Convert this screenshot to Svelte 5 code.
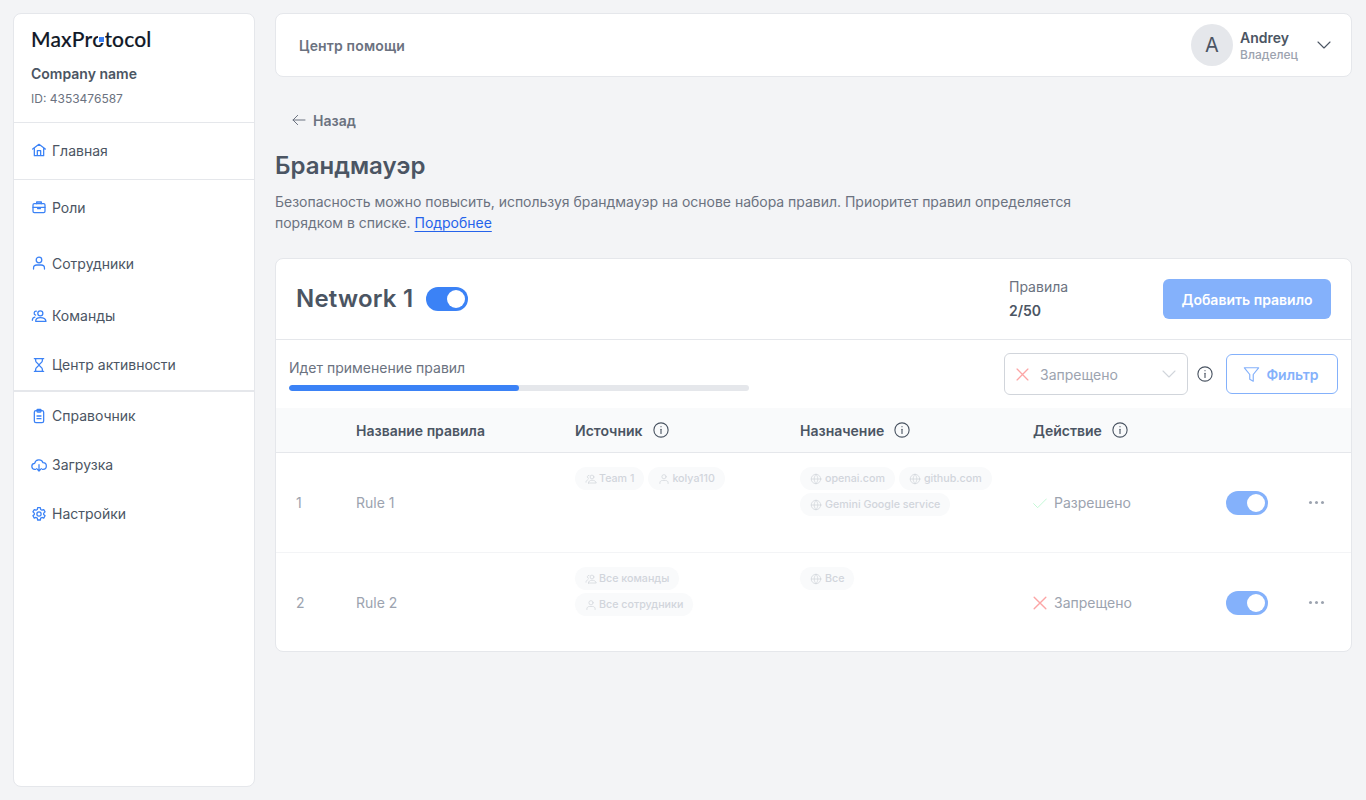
<script>
  const nav1 = [
    { label: 'Роли', icon: 'brief', h: 'tall' },
    { label: 'Сотрудники', icon: 'user', h: 'tall' },
    { label: 'Команды', icon: 'team', h: '' },
    { label: 'Центр активности', icon: 'hour', h: '' }
  ];
  const nav2 = [
    { label: 'Справочник', icon: 'clip' },
    { label: 'Загрузка', icon: 'cloud' },
    { label: 'Настройки', icon: 'gear' }
  ];
  const rows = [
    {
      n: 1, name: 'Rule 1',
      src: [{ t: 'Team 1', i: 'team' }, { t: 'kolya110', i: 'user' }],
      dst: [{ t: 'openai.com', i: 'globe' }, { t: 'github.com', i: 'globe' }, { t: 'Gemini Google service', i: 'globe' }],
      ok: true, action: 'Разрешено'
    },
    {
      n: 2, name: 'Rule 2',
      src: [{ t: 'Все команды', i: 'team' }, { t: 'Все сотрудники', i: 'user' }],
      dst: [{ t: 'Все', i: 'globe' }],
      ok: false, action: 'Запрещено'
    }
  ];
  const heads = [
    { t: 'Источник', info: true },
    { t: 'Назначение', info: true },
    { t: 'Действие', info: true }
  ];
</script>

{#snippet icon(name, size, sw = 1.5)}
  <svg class="ic" width={size} height={size} viewBox="0 0 24 24" fill="none" stroke="currentColor" stroke-width={sw} stroke-linecap="round" stroke-linejoin="round">
    {#if name === 'home'}
      <path d="M2.500 10.500 12 3.500l9.500 7M5 9v11.500h14V9M9.500 20.500V13h5v7.500" />
    {:else if name === 'brief'}
      <path d="M8.500 7V4.500h7V7" /><rect x="3" y="7" width="18" height="13.500" rx="2" /><path d="M3 12.500h18M10 12.500v2h4v-2" />
    {:else if name === 'user'}
      <circle cx="12" cy="7.500" r="4.200" /><path d="M3.800 21v-1.500c0-2.800 2.200-4.500 5-4.500h6.400c2.800 0 5 1.700 5 4.500V21" />
    {:else if name === 'team'}
      <circle cx="14" cy="8" r="3.800" /><path d="M7 20c0-3.500 2.500-5.500 7-5.500s8 2 8.500 5.500H7Z" /><path d="M8 4.800a3 3 0 0 0-1 5.900M2 18.500c0-2.800 1.300-4.300 3.800-4.800" />
    {:else if name === 'hour'}
      <path d="M5 2.500h14M5 21.500h14M7 2.500v3.500c0 2.500 5 4.500 5 6s-5 3.500-5 6v3.500M17 2.500v3.500c0 2.500-5 4.500-5 6s5 3.500 5 6v3.500" />
    {:else if name === 'clip'}
      <rect x="5" y="4" width="14" height="18" rx="2.500" /><rect x="9" y="2" width="6" height="4" rx="1" /><path d="M9 12h6M9 16h6" />
    {:else if name === 'cloud'}
      <path d="M7 18.500H6a4.500 4.500 0 0 1-.5-9A6.500 6.500 0 0 1 18 8.500a5 5 0 0 1 0 10h-1" /><path d="M12 11.500v9M8.500 17.500l3.500 3.500 3.500-3.500" />
    {:else if name === 'gear'}
      <circle cx="12" cy="12" r="3.200" /><path d="M10 2.500h4l.6 2.800 1.800 1 2.700-.9 2 3.400-2.100 1.900v2.100l2.100 1.900-2 3.400-2.700-.9-1.800 1-.6 2.800h-4l-.6-2.800-1.800-1-2.700.9-2-3.400 2.100-1.900v-2.100L2.900 8.800l2-3.400 2.700.9 1.800-1Z" />
    {:else if name === 'globe'}
      <circle cx="12" cy="12" r="9.500" /><path d="M2.500 12h19M12 2.500c-5 5.500-5 13.500 0 19M12 2.500c5 5.500 5 13.500 0 19" />
    {:else if name === 'info'}
      <circle cx="12" cy="12" r="9.500" /><path d="M12 11v5.500" /><path d="M12 7.500v.2" />
    {:else if name === 'x'}
      <path d="M2 2l20 20M22 2 2 22" />
    {:else if name === 'check'}
      <path d="M1 13l7 7L23 5" />
    {:else if name === 'down'}
      <path d="M4 8l8 8 8-8" />
    {:else if name === 'filter'}
      <path d="M3 3.500h18l-6.800 8.500v8.500l-4.400-2.500v-6L3 3.500Z" />
    {:else if name === 'back'}
      <path d="M21 12H3M10 5l-7 7 7 7" />
    {/if}
  </svg>
{/snippet}

{#snippet navItem(item)}
  <div class="nav-item {item.h || ''}">
    <span class="nav-ic">{@render icon(item.icon, 16, 1.9)}</span>
    <span>{item.label}</span>
  </div>
{/snippet}

{#snippet chips(list, kind)}
  <div class="chips {kind}">
    {#each list as c}
      <span class="chip">{@render icon(c.i, 12)}{c.t}</span>
    {/each}
  </div>
{/snippet}

<div class="page">
  <aside class="side">
    <div class="brand">
      <div class="logo">MaxPr<span class="logo-o">o<i></i></span>tocol</div>
      <div class="company">Company name</div>
      <div class="cid">ID: 4353476587</div>
    </div>
    <div class="nav-home">
      {@render navItem({ label: 'Главная', icon: 'home', h: 'home' })}
    </div>
    <div class="nav-a">
      {#each nav1 as item}{@render navItem(item)}{/each}
    </div>
    <div>
      {#each nav2 as item}{@render navItem(item)}{/each}
    </div>
  </aside>

  <main class="main">
    <header class="top">
      <div class="top-title">Центр помощи</div>
      <div class="profile">
        <div class="avatar">A</div>
        <div class="who">
          <div class="who-name">Andrey</div>
          <div class="who-role">Владелец</div>
        </div>
        <span class="who-arrow">{@render icon('down', 18)}</span>
      </div>
    </header>

    <div class="back">{@render icon('back', 16)}<span>Назад</span></div>
    <h1>Брандмауэр</h1>
    <p class="desc">Безопасность можно повысить, используя брандмауэр на основе набора правил. Приоритет правил определяется порядком в списке. <a href="#more">Подробнее</a></p>

    <section class="card">
      <div class="card-head">
        <div class="net">
          <span class="net-name">Network 1</span>
          <span class="toggle strong"><i></i></span>
        </div>
        <div class="rules">
          <div class="rules-label">Правила</div>
          <div class="rules-val">2/50</div>
        </div>
        <button class="add">Добавить правило</button>
      </div>

      <div class="tools">
        <div class="progress">
          <div class="progress-label">Идет применение правил</div>
          <div class="track"><div class="fill" style="width: 50%"></div></div>
        </div>
        <div class="select">
          <span class="sel-x">{@render icon('x', 13, 2.4)}</span>
          <span class="sel-t">Запрещено</span>
          <span class="sel-d">{@render icon('down', 18)}</span>
        </div>
        <span class="tool-info">{@render icon('info', 18)}</span>
        <button class="filter">{@render icon('filter', 19)}<span>Фильтр</span></button>
      </div>

      <div class="grid thead">
        <div></div>
        <div>Название правила</div>
        {#each heads as h}
          <div class="th">{h.t}<span class="th-i">{@render icon('info', 18)}</span></div>
        {/each}
        <div></div>
        <div></div>
      </div>

      {#each rows as r}
        <div class="grid row">
          <div class="cell-c muted">{r.n}</div>
          <div class="cell-c muted">{r.name}</div>
          <div>{@render chips(r.src, 'src')}</div>
          <div>{@render chips(r.dst, 'dst')}</div>
          <div class="cell-c act">
            <span class={r.ok ? 'ok' : 'no'}>{@render icon(r.ok ? 'check' : 'x', 14, r.ok ? 1.5 : 2.4)}</span>
            <span class="muted">{r.action}</span>
          </div>
          <div class="cell-c"><span class="toggle"><i></i></span></div>
          <div class="cell-c dots"><b></b><b></b><b></b></div>
        </div>
      {/each}
    </section>
  </main>
</div>

<style>
  :global(body) {
    margin: 0;
    background: #f3f4f6;
    font-family: Inter, "Noto Sans", sans-serif;
    color: #4b5563;
  }
  .page {
    display: flex;
    gap: 20px;
    height: 800px;
    box-sizing: border-box;
    padding: 13px 14px 13px 13px;
    overflow: hidden;
  }
  .ic { display: block; flex: none; }

  .side {
    width: 242px;
    flex: none;
    box-sizing: border-box;
    background: #fff;
    border: 1px solid #e5e7eb;
    border-radius: 8px;
    font-size: 14px;
  }
  .brand {
    height: 109px;
    box-sizing: border-box;
    padding: 11px 0 0 17px;
    border-bottom: 1px solid #e5e7eb;
  }
  .logo {
    font-family: Lato, sans-serif;
    font-size: 21px;
    line-height: 28px;
    font-weight: 500;
    color: #111827;
    letter-spacing: 0.15px;
    -webkit-text-stroke: 0.15px #111827;
  }
  .logo-o { position: relative; display: inline-block; }
  .logo-o i {
    position: absolute;
    right: 0;
    top: 12px;
    width: 5px;
    height: 5px;
    background: #3b82f6;
    box-shadow: 0 0 0 1px #fff;
  }
  .company { margin-top: 11px; font-weight: 600; line-height: 20px; }
  .cid { margin-top: 6px; font-size: 12px; line-height: 18px; color: #6b7280; }
  .nav-home { border-bottom: 1px solid #e5e7eb; }
  .nav-a { border-bottom: 2px solid #e5e7eb; }
  .nav-item {
    display: flex;
    align-items: center;
    gap: 5px;
    height: 49px;
    box-sizing: border-box;
    padding: 0 0 2px 17px;
    color: #4b5563;
  }
  .nav-item.home { height: 56px; }
  .nav-item.tall { height: 56px; }
  .nav-ic { color: #3b82f6; }

  .main { flex: 1; min-width: 0; }
  .top {
    height: 64px;
    box-sizing: border-box;
    background: #fff;
    border: 1px solid #e5e7eb;
    border-radius: 8px;
    display: flex;
    align-items: center;
    justify-content: space-between;
    padding: 0 18px 0 23px;
  }
  .top-title { font-size: 14px; font-weight: 600; color: #6b7280; letter-spacing: 0.15px; }
  .profile { display: flex; align-items: center; }
  .avatar {
    width: 42px;
    height: 42px;
    border-radius: 50%;
    background: #e5e7eb;
    display: flex;
    align-items: center;
    justify-content: center;
    font-size: 20px;
    color: #4b5563;
  }
  .who { margin-left: 7px; width: 75px; }
  .who-name { font-size: 14px; line-height: 18px; font-weight: 600; color: #4b5563; margin-top: 1px; }
  .who-role { font-size: 12px; line-height: 16px; font-weight: 500; color: #9ca3af; }
  .who-arrow { color: #4b5563; }

  .back {
    display: flex;
    align-items: center;
    gap: 6px;
    margin: 33px 0 0 16px;
    height: 20px;
    font-size: 14px;
    font-weight: 600;
    color: #6b7280;
  }
  h1 {
    margin: 21px 0 0;
    font-size: 24px;
    line-height: 30px;
    font-weight: 600;
    color: #4b5563;
  }
  .desc {
    margin: 10px 0 0;
    width: 820px;
    font-size: 14px;
    line-height: 21px;
    color: #6b7280;
    letter-spacing: -0.02px;
  }
  .desc a { color: #2563eb; text-decoration: underline; text-underline-offset: 3px; }

  .card {
    margin-top: 25px;
    background: #fff;
    border: 1px solid #e5e7eb;
    border-radius: 8px;
    overflow: hidden;
  }
  .card-head {
    height: 81px;
    box-sizing: border-box;
    border-bottom: 1px solid #e5e7eb;
    display: flex;
    align-items: center;
    padding: 0 20px;
  }
  .net { display: flex; align-items: center; gap: 13px; width: 713px; }
  .net-name { font-size: 24px; font-weight: 600; color: #4b5563; line-height: 30px; letter-spacing: 0.2px; }
  .toggle {
    display: block;
    box-sizing: border-box;
    width: 42px;
    height: 24px;
    border-radius: 12px;
    background: #84b1fb;
    position: relative;
  }
  .toggle.strong { background: #3b82f6; }
  .toggle i {
    position: absolute;
    top: 3px;
    right: 3px;
    width: 18px;
    height: 18px;
    border-radius: 50%;
    background: #fff;
  }
  .rules { width: 154px; }
  .rules-label { font-size: 14px; line-height: 20px; color: #6b7280; }
  .rules-val { margin-top: 4px; font-size: 14px; line-height: 20px; font-weight: 600; color: #4b5563; }
  .add {
    width: 168px;
    height: 40px;
    border: 0;
    border-radius: 6px;
    background: #84b1fb;
    color: #fff;
    font: 600 14px Inter, sans-serif;
  }

  .tools {
    height: 68px;
    box-sizing: border-box;
    display: flex;
    align-items: center;
    padding: 0 13px;
  }
  .progress { width: 715px; }
  .progress-label { font-size: 14px; line-height: 20px; color: #6b7280; }
  .track {
    margin-top: 7px;
    width: 460px;
    height: 6px;
    background: #e5e7eb;
    border-radius: 3px;
    overflow: hidden;
  }
  .fill { height: 100%; background: #3b82f6; border-radius: 3px; }
  .select {
    width: 184px;
    height: 42px;
    box-sizing: border-box;
    border: 1px solid #d1d5db;
    border-radius: 6px;
    display: flex;
    align-items: center;
    padding: 0 9px 0 11px;
    font-size: 14px;
    color: #9ca3af;
  }
  .sel-x { color: #fca5a5; }
  .sel-t { margin-left: 11px; flex: 1; }
  .sel-d { color: #d1d5db; }
  .tool-info { margin: 0 12px 0 8px; color: #4b5563; }
  .filter {
    width: 112px;
    height: 40px;
    box-sizing: border-box;
    background: #fff;
    border: 1px solid #84b1fb;
    border-radius: 6px;
    color: #84b1fb;
    font: 600 14px Inter, sans-serif;
    display: flex;
    align-items: center;
    justify-content: center;
    gap: 5px;
    padding: 0 3px 0 0;
  }

  .grid {
    display: grid;
    grid-template-columns: 60px 219px 225px 233px 193px 83px 1fr;
    padding-left: 20px;
    font-size: 14px;
  }
  .thead {
    height: 45px;
    box-sizing: border-box;
    align-items: center;
    background: #f9fafb;
    border-bottom: 1px solid #e5e7eb;
    font-weight: 600;
    color: #4b5563;
  }
  .th { display: flex; align-items: center; gap: 9px; }
  .th-i { font-weight: 400; }
  .row {
    height: 100px;
    box-sizing: border-box;
    padding-top: 14px;
    border-bottom: 1px solid #f3f4f6;
  }
  .row:last-child { height: 98px; border-bottom: 0; }
  .cell-c { display: flex; align-items: center; height: 71px; }
  .muted { color: #9ca3af; }
  .chips { display: flex; flex-wrap: wrap; gap: 3px 4px; width: 210px; }
  .chip {
    display: inline-flex;
    align-items: center;
    gap: 3px;
    height: 23px;
    padding: 0 10px;
    border-radius: 12px;
    background: #f9fafb;
    color: #d1d5db;
    font-size: 10.7px;
    font-weight: 500;
    white-space: nowrap;
  }
  .src .chip { gap: 2px; }
  .act { gap: 7px; }
  .ok { color: #bbf7d0; }
  .no { color: #fca5a5; }
  .dots { gap: 3px; }
  .dots b { display: block; width: 3px; height: 3px; border-radius: 50%; background: #9ca3af; }
</style>
